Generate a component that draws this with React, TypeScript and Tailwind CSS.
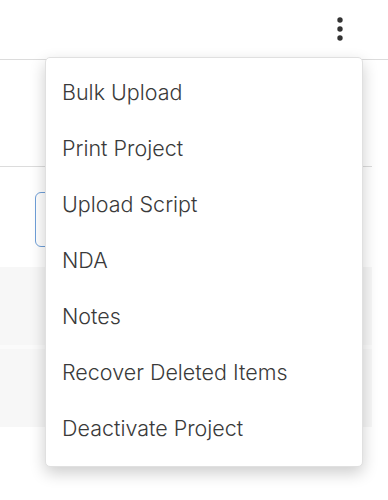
import { useState } from "react";

const items = [
  "Bulk Upload",
  "Print Project",
  "Upload Script",
  "NDA",
  "Notes",
  "Recover Deleted Items",
  "Deactivate Project",
];

function Dots() {
  return (
    <svg width="8" height="26" viewBox="0 0 8 26" className="text-[#333]">
      <circle cx="4" cy="4" r="2.7" fill="currentColor" />
      <circle cx="4" cy="13" r="2.7" fill="currentColor" />
      <circle cx="4" cy="22" r="2.7" fill="currentColor" />
    </svg>
  );
}

export default function App() {
  const [open] = useState(true);

  return (
    <div
      className="relative h-[500px] w-[388px] overflow-hidden bg-white"
      style={{ fontFamily: 'Inter, "Noto Sans", sans-serif' }}
    >
      {/* header */}
      <div className="flex h-[60px] items-center justify-end border-b border-[#dcdcdc] pr-[44px]">
        <button className="flex items-center pb-[2px]">
          <Dots />
        </button>
      </div>

      {/* content */}
      <div className="pr-4">
        <div className="h-[107px] border-b border-[#dcdcdc]" />
        <div className="flex h-[100px] items-center pl-[35px] pt-[4px]">
          <div className="h-[55px] w-[200px] rounded-l-[6px] border border-[#6f9fd8]" />
        </div>
        <div className="h-[78px] bg-[#f7f7f7]" />
        <div className="h-[4px] bg-[#fbfbfb]" />
        <div className="h-[78px] bg-[#f7f7f7]" />
      </div>

      {/* dropdown */}
      {open && (
        <div className="absolute left-[45px] top-[57px] w-[318px] rounded-[5px] border border-[#e0e0e0] bg-white pb-[10px] pt-[6px] shadow-[0_6px_16px_rgba(0,0,0,0.2)]">
          {items.map((label) => (
            <div
              key={label}
              className="flex h-[56px] items-center pl-[16px] text-[21.5px] font-light text-[#3a3a3a]"
            >
              {label}
            </div>
          ))}
        </div>
      )}
    </div>
  );
}
